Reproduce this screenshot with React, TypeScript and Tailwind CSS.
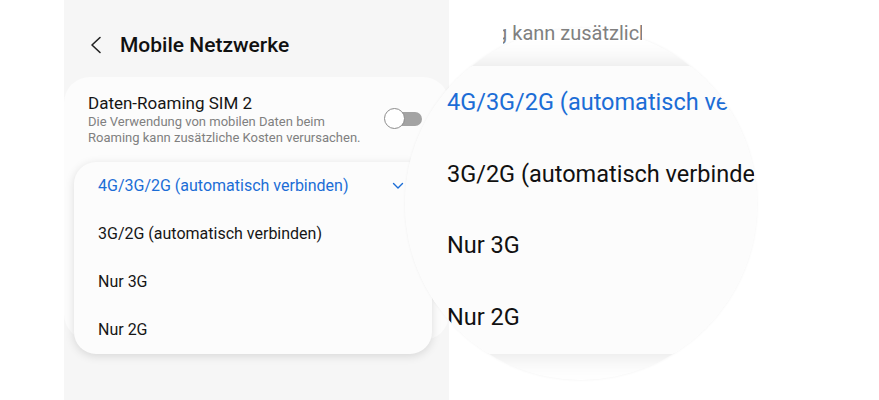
import React from "react";

const font = { fontFamily: "Roboto, 'Noto Sans', sans-serif" };

function Toggle() {
  return (
    <div className="relative w-[38px] h-[21px] flex items-center">
      <div className="absolute left-[8px] right-0 h-[14px] rounded-full bg-[#a3a3a3]" />
      <div className="absolute left-0 w-[21px] h-[21px] rounded-full bg-white border-[1.5px] border-[#8c8c8c]" />
    </div>
  );
}

const items = [
  "4G/3G/2G (automatisch verbinden)",
  "3G/2G (automatisch verbinden)",
  "Nur 3G",
  "Nur 2G",
];

export default function App() {
  return (
    <div className="relative w-[879px] h-[400px] bg-white overflow-hidden" style={font}>
      {/* Phone panel */}
      <div className="relative ml-[64px] w-[385px] h-[400px] bg-[#f6f6f6]">
        <div className="h-[77px] pt-[13px] flex items-center pl-[26px] gap-[18px]">
          <svg width="12" height="18" viewBox="0 0 12 18" fill="none">
            <polyline points="10,1.5 2,9 10,16.5" stroke="#222" strokeWidth="1.6" strokeLinecap="round" strokeLinejoin="round" />
          </svg>
          <div className="text-[21px] font-medium text-[#111] leading-none">Mobile Netzwerke</div>
        </div>
        <div className="h-[263px] rounded-[26px] bg-[#fcfcfc] pl-[24px] pr-[27px] pt-[15px] flex items-start justify-between">
          <div>
            <div className="text-[17px] leading-[22px] text-[#151515]">Daten-Roaming SIM 2</div>
            <div className="text-[13px] leading-[16px] text-[#808080]">
              Die Verwendung von mobilen Daten beim
              <br />
              Roaming kann zusätzliche Kosten verursachen.
            </div>
          </div>
          <div className="pt-[16px]">
            <Toggle />
          </div>
        </div>
        {/* Dropdown menu */}
        <div className="absolute left-[10px] top-[162px] w-[358px] rounded-[22px] bg-[#fcfcfc] shadow-[0_2px_10px_rgba(0,0,0,0.13)] flex flex-col">
          {items.map((t, i) => (
            <div key={t} className="h-[48px] pl-[24px] pr-[28px] flex items-center justify-between">
              <span className={`text-[16px] ${i === 0 ? "text-[#1b6dd6]" : "text-[#161616]"}`}>{t}</span>
              {i === 0 && (
                <svg width="12" height="8" viewBox="0 0 12 8" fill="none">
                  <polyline points="1.5,1.5 6,6 10.5,1.5" stroke="#1b6dd6" strokeWidth="1.4" strokeLinecap="round" strokeLinejoin="round" />
                </svg>
              )}
            </div>
          ))}
        </div>
      </div>

      {/* Magnifier circle */}
      <div className="absolute left-[405px] top-[28px] w-[352px] h-[352px] rounded-full overflow-hidden bg-white shadow-[0_0_3px_rgba(0,0,0,0.06)]">
        <div className="mt-[38px] ml-[-20px] w-[420px] bg-[#fcfcfc] py-[1px] shadow-[0_0_26px_rgba(0,0,0,0.12)] flex flex-col">
          {items.map((t, i) => (
            <div key={t} className="h-[71.5px] pl-[62px] flex items-center">
              {i === 0 ? (
                <div className="w-[283px] overflow-hidden whitespace-nowrap text-[23.5px] text-[#1b6dd6]">{t}</div>
              ) : (
                <div className="whitespace-nowrap text-[23.5px] text-[#111]">{t}</div>
              )}
            </div>
          ))}
        </div>
      </div>

      {/* Magnifier gray text fragment */}
      <div className="absolute left-[503px] top-[22px] w-[139px] h-[22px] overflow-hidden">
        <div className="ml-[-75px] whitespace-nowrap text-[20px] leading-[22px] text-[#808080]">Roaming kann zusätzliche Kosten</div>
      </div>
    </div>
  );
}
